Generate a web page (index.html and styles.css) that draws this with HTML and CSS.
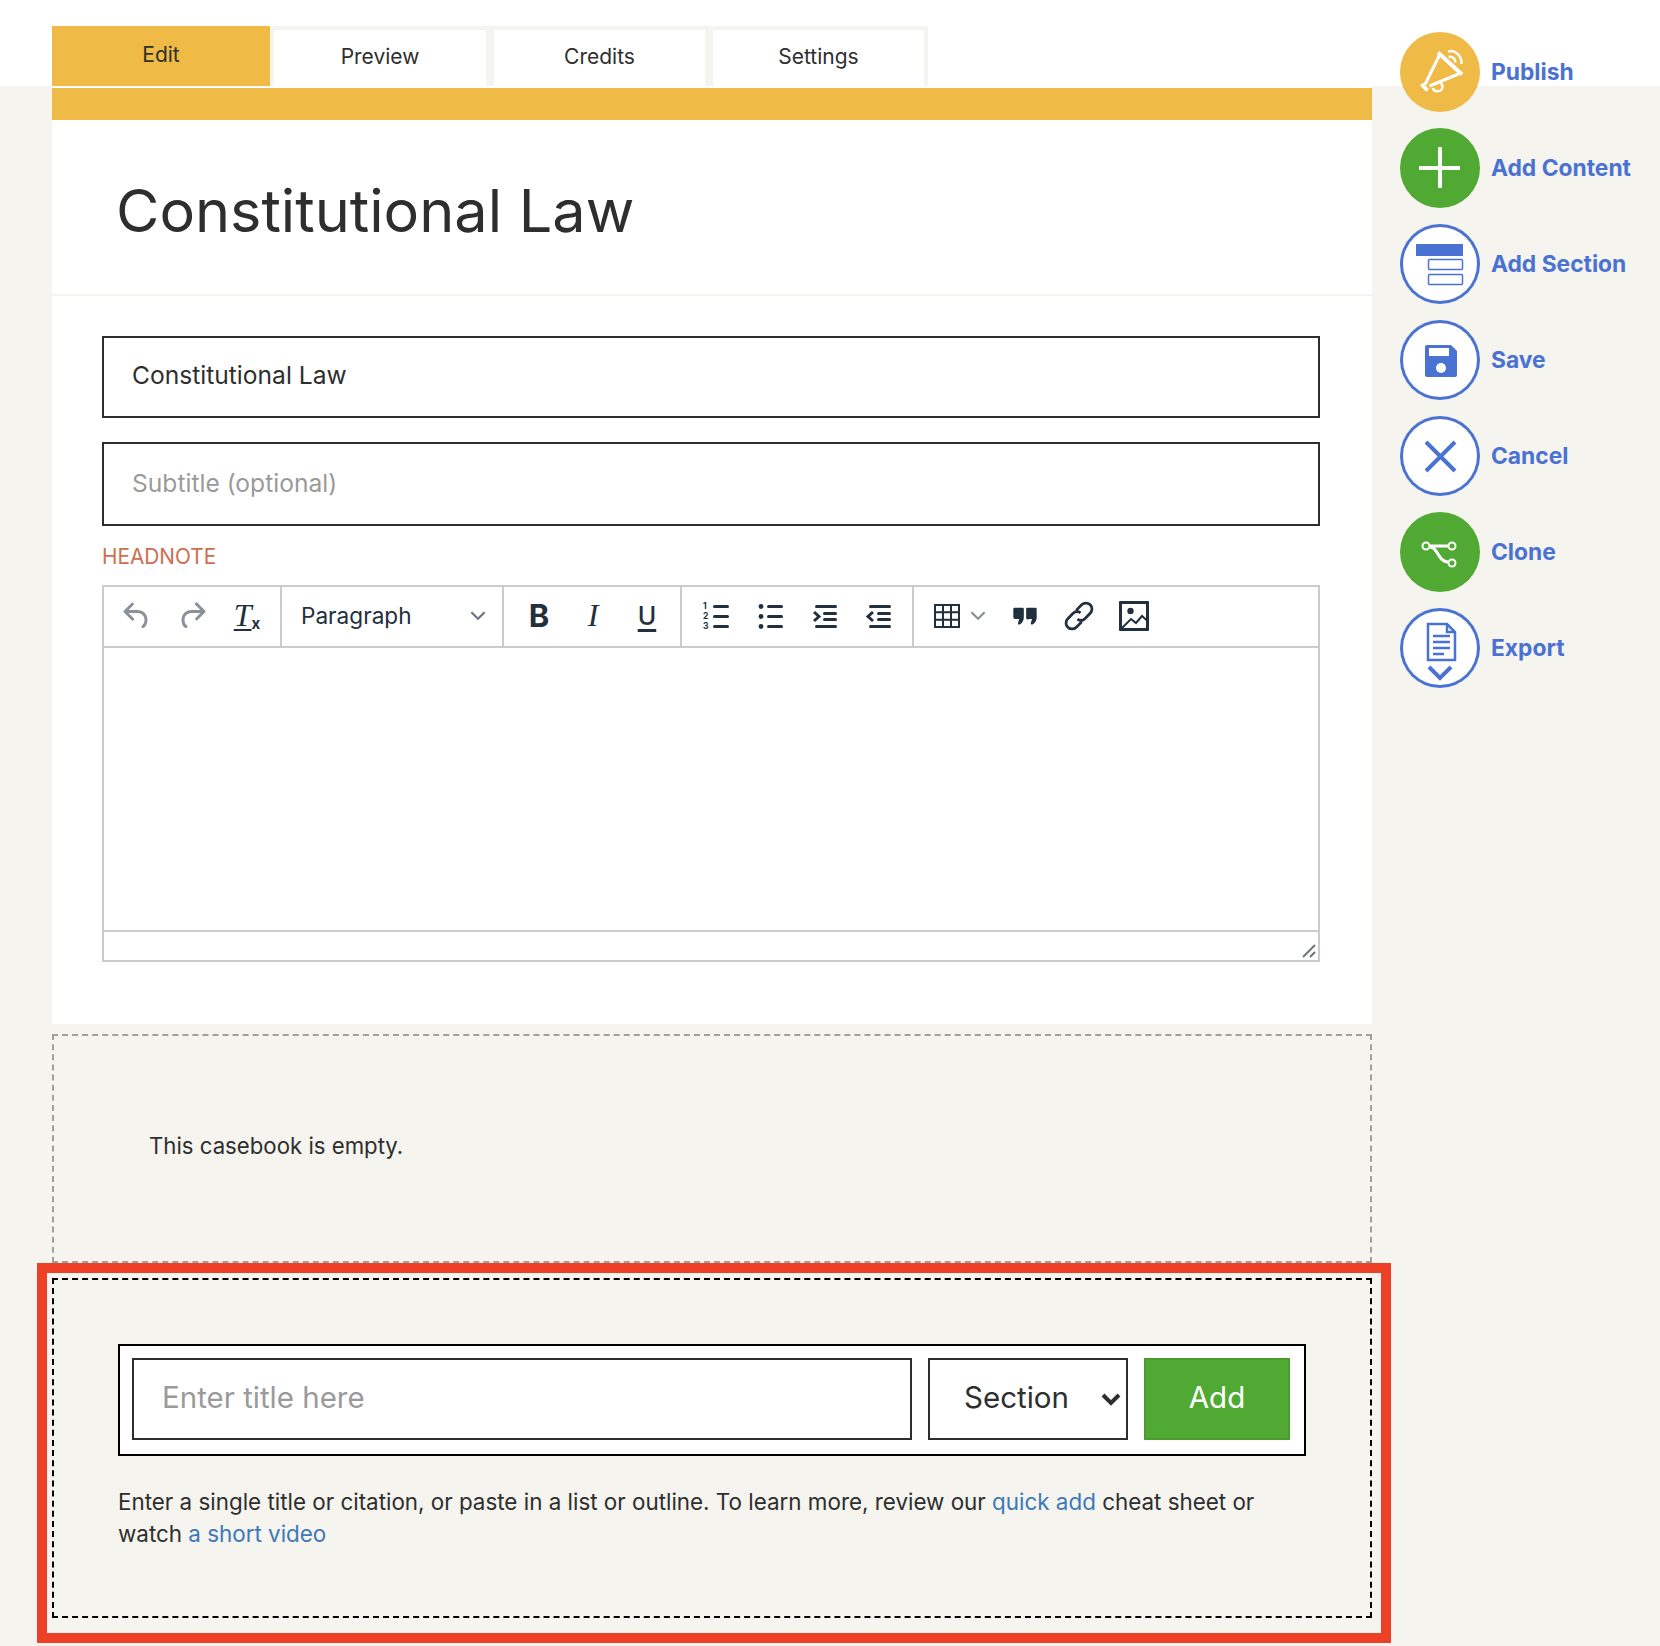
FILE: index.html

```html
<!DOCTYPE html>
<html lang="en">
<head>
  <meta charset="UTF-8" />
  <meta name="viewport" content="width=device-width, initial-scale=1.0"/>
  <title>Constitutional Law</title>
  <link rel="stylesheet" href="styles.css">
</head>
<body>
  <div class="page">
    <main class="content">
      <nav class="tabs">
        <a class="tab tab-active">Edit</a>
        <div class="tab-group">
          <a class="tab">Preview</a>
          <a class="tab">Credits</a>
          <a class="tab">Settings</a>
        </div>
      </nav>

      <section class="panel">
        <div class="panel-bar"></div>
        <header class="panel-head">
          <h1>Constitutional Law</h1>
        </header>
        <form class="details">
          <input class="field" type="text" value="Constitutional Law" />
          <input class="field field-sub" type="text" placeholder="Subtitle (optional)" />
          <label class="field-label">HEADNOTE</label>

          <div class="editor">
            <div class="toolbar">
              <div class="tool-group tool-history">
                <button type="button" class="tool tool-muted">
                  <svg viewBox="0 0 24 24"><path d="M6.4 8H12c3.7 0 6.2 2 6.8 5.1.6 2.7-.4 5.6-2.3 6.8a1 1 0 0 1-1-1.8c1.1-.6 1.8-2.7 1.4-4.6-.5-2.1-2.1-3.5-4.9-3.5H6.4l3.3 3.3a1 1 0 1 1-1.4 1.4l-5-5a1 1 0 0 1 0-1.4l5-5a1 1 0 0 1 1.4 1.4L6.4 8z"/></svg>
                </button>
                <button type="button" class="tool tool-muted">
                  <svg viewBox="0 0 24 24"><path d="M17.6 10H12c-2.8 0-4.4 1.4-4.9 3.5-.4 2 .3 4 1.4 4.6a1 1 0 1 1-1 1.8c-2-1.2-2.9-4.1-2.3-6.8.6-3 3-5.1 6.8-5.1h5.6l-3.3-3.3a1 1 0 1 1 1.4-1.4l5 5a1 1 0 0 1 0 1.4l-5 5a1 1 0 0 1-1.4-1.4l3.3-3.3z"/></svg>
                </button>
                <button type="button" class="tool tool-clear"><span class="clear-t">T</span><span class="clear-x">x</span></button>
              </div>
              <div class="tool-group tool-format">
                <span>Paragraph</span>
                <svg class="chevron" viewBox="0 0 16 10"><path d="M2 2l6 6 6-6"/></svg>
              </div>
              <div class="tool-group tool-text">
                <button type="button" class="tool tool-bold">B</button>
                <button type="button" class="tool tool-italic">I</button>
                <button type="button" class="tool tool-under">U</button>
              </div>
              <div class="tool-group tool-lists">
                <button type="button" class="tool">
                  <svg viewBox="0 0 30 30">
                    <text class="list-num" x="1" y="8">1</text>
                    <text class="list-num" x="1" y="17.500">2</text>
                    <text class="list-num" x="1" y="27.500">3</text>
                    <rect x="11" y="4" width="16" height="3" rx="1.5"/>
                    <rect x="11" y="14" width="16" height="3" rx="1.5"/>
                    <rect x="11" y="24" width="16" height="3" rx="1.5"/>
                  </svg>
                </button>
                <button type="button" class="tool">
                  <svg viewBox="0 0 30 30">
                    <circle cx="5" cy="5.500" r="2.400"/><circle cx="5" cy="15.500" r="2.400"/><circle cx="5" cy="25.500" r="2.400"/>
                    <rect x="11" y="4" width="16" height="3" rx="1.5"/>
                    <rect x="11" y="14" width="16" height="3" rx="1.5"/>
                    <rect x="11" y="24" width="16" height="3" rx="1.5"/>
                  </svg>
                </button>
                <button type="button" class="tool">
                  <svg viewBox="0 0 30 30">
                    <rect x="5" y="4" width="22" height="3" rx="1.5"/>
                    <rect x="13" y="11" width="14" height="3" rx="1.5"/>
                    <rect x="13" y="17" width="14" height="3" rx="1.5"/>
                    <rect x="5" y="24" width="22" height="3" rx="1.5"/>
                    <path class="line" d="M4 11l5 4.500-5 4.500"/>
                  </svg>
                </button>
                <button type="button" class="tool">
                  <svg viewBox="0 0 30 30">
                    <rect x="5" y="4" width="22" height="3" rx="1.5"/>
                    <rect x="13" y="11" width="14" height="3" rx="1.500"/>
                    <rect x="13" y="17" width="14" height="3" rx="1.500"/>
                    <rect x="5" y="24" width="22" height="3" rx="1.5"/>
                    <path class="line" d="M9 11l-5 4.500 5 4.500"/>
                  </svg>
                </button>
              </div>
              <div class="tool-group tool-insert">
                <button type="button" class="tool tool-table">
                  <svg viewBox="0 0 26 24">
                    <path class="line thin" d="M1 1h24v22H1zM1 8.300h24M1 15.700h24M9 1v22M17 1v22"/>
                  </svg>
                </button>
                <svg class="chevron" viewBox="0 0 16 10"><path d="M2 2l6 6 6-6"/></svg>
                <button type="button" class="tool tool-quote">
                  <svg viewBox="0 0 24 24">
                    <path d="M3 5h7a1 1 0 0 1 1 1v7c0 2.500-1.300 5-3.500 6.200-1 .5-1.800-.2-1.500-1.200l1-3.500H3.500A1.500 1.500 0 0 1 2 13V6a1 1 0 0 1 1-1zM14 5h7a1 1 0 0 1 1 1v7c0 2.500-1.300 5-3.500 6.200-1 .5-1.800-.2-1.500-1.200l1-3.500h-2.500A1.500 1.500 0 0 1 13 13V6a1 1 0 0 1 1-1z"/>
                  </svg>
                </button>
                <button type="button" class="tool tool-link">
                  <svg viewBox="0 0 30 30">
                    <path class="line thick" d="M12.500 9.500l5-5a5.500 5.500 0 0 1 8 8l-5 5a5.500 5.500 0 0 1-7 .5M17.500 20.500l-5 5a5.500 5.500 0 0 1-8-8l5-5a5.500 5.500 0 0 1 7-.5"/>
                  </svg>
                </button>
                <button type="button" class="tool">
                  <svg viewBox="0 0 30 30">
                    <rect x="0" y="0" width="30" height="30" rx="1"/>
                    <rect class="hole" x="3" y="3" width="24" height="24"/>
                    <circle cx="11.500" cy="10" r="3.200"/>
                    <path class="line thin" d="M3 27l9-9 5 4 6-7 5 4.500"/>
                  </svg>
                </button>
              </div>
            </div>
            <div class="editor-body"></div>
            <div class="editor-status">
              <svg class="grip" viewBox="0 0 14 14"><path d="M1 13L13 1M8 13l5-5"/></svg>
            </div>
          </div>
        </form>
      </section>

      <section class="empty-note">
        <p>This casebook is empty.</p>
      </section>

      <div class="callout">
        <section class="quick-add">
          <form class="quick-form">
            <input class="quick-title" type="text" placeholder="Enter title here" />
            <div class="quick-select">
              <select class="quick-type">
                <option>Section</option>
                <option>Resource</option>
              </select>
              <svg class="quick-arrow" viewBox="0 0 20 14"><path d="M2 2l8 8 8-8"/></svg>
            </div>
            <button type="button" class="quick-btn">Add</button>
          </form>
          <p class="quick-help">Enter a single title or citation, or paste in a list or outline. To learn more, review our <a href="#">quick add</a> cheat sheet or watch <a href="#">a short video</a></p>
        </section>
      </div>
    </main>

    <aside class="actions">
      <a class="action">
        <span class="action-icon icon-gold">
          <svg viewBox="0 0 80 80">
            <path class="stroke-white wide" d="M38 20.500l24 22M21.500 52l6 6.500"/>
            <path class="stroke-white" d="M39.500 23L25 52.500M58.500 42L29.500 54"/>
            <path class="stroke-white thin" d="M33 56c1 4.500 8 4.500 9.500-.5.500-2-.5-3.500-2-4.500"/>
            <path class="stroke-white thin" d="M48 19.500c7-2 14 4 13.500 12.500M48.500 25c4-1 7 2 7 5.500"/>
          </svg>
        </span>
        <span class="action-label">Publish</span>
      </a>
      <a class="action">
        <span class="action-icon icon-green">
          <svg viewBox="0 0 80 80"><path class="stroke-white wide" d="M40 19v41M19 40h41"/></svg>
        </span>
        <span class="action-label">Add Content</span>
      </a>
      <a class="action">
        <span class="action-icon icon-outline">
          <svg viewBox="0 0 80 80">
            <rect class="fill-blue" x="16" y="20" width="47" height="12"/>
            <rect class="stroke-blue" x="28.500" y="35.500" width="34" height="10" rx="1"/>
            <rect class="stroke-blue" x="28.500" y="50.500" width="34" height="10" rx="1"/>
          </svg>
        </span>
        <span class="action-label">Add Section</span>
      </a>
      <a class="action">
        <span class="action-icon icon-outline">
          <svg viewBox="0 0 80 80">
            <path class="fill-blue" d="M27 25h24l6 6v24a2 2 0 0 1-2 2H27a2 2 0 0 1-2-2V27a2 2 0 0 1 2-2z"/>
            <rect class="fill-white" x="29" y="28" width="20" height="8"/>
            <circle class="fill-white" cx="41" cy="48" r="5"/>
          </svg>
        </span>
        <span class="action-label">Save</span>
      </a>
      <a class="action">
        <span class="action-icon icon-outline">
          <svg viewBox="0 0 80 80"><path class="stroke-blue wide" d="M26 26l29 29M55 26L26 55"/></svg>
        </span>
        <span class="action-label">Cancel</span>
      </a>
      <a class="action">
        <span class="action-icon icon-green">
          <svg viewBox="0 0 80 80">
            <path class="stroke-white" d="M30 34h18M30 35c8 0 8 15 18 15"/>
            <circle class="ring-white" cx="26" cy="34" r="3.500"/>
            <circle class="ring-white" cx="52" cy="34" r="3.500"/>
            <circle class="ring-white" cx="52" cy="51" r="3.500"/>
          </svg>
        </span>
        <span class="action-label">Clone</span>
      </a>
      <a class="action">
        <span class="action-icon icon-outline">
          <svg viewBox="0 0 80 80">
            <path class="stroke-blue medium" d="M28 16h19l8 8v28H28zM47 16v8h8"/>
            <path class="stroke-blue medium" d="M33 28h17M33 34h17M33 40h17M33 46h11"/>
            <path class="stroke-blue wide" d="M29 59l11 11 11-11"/>
          </svg>
        </span>
        <span class="action-label">Export</span>
      </a>
    </aside>
  </div>
</body>
</html>
```

FILE: styles.css

```css
* {
  box-sizing: border-box;
}
body {
  margin: 0;
  font-family: Inter, "Liberation Sans", sans-serif;
  color: #2e2e2e;
  background: linear-gradient(#fff 86px, #f5f4ee 86px);
}
.page {
  display: flex;
  padding-left: 52px;
  height: 1646px;
  overflow: hidden;
}
.content {
  width: 1320px;
  padding-top: 26px;
}

/* tabs */
.tabs {
  display: flex;
  height: 60px;
}
.tab {
  display: flex;
  align-items: center;
  justify-content: center;
  font-size: 21px;
  color: #2e2e2e;
}
.tab-active {
  width: 218px;
  background: #efba45;
  padding-bottom: 4px;
}
.tab-group {
  display: flex;
  gap: 8px;
  padding: 4px 4px 0 4px;
  background: #f5f4ee;
}
.tab-group .tab {
  width: 211px;
  padding-bottom: 4px;
  background: #fff;
}
.tab-group .tab:first-child {
  width: 212px;
}

/* main panel */
.panel {
  background: #fff;
  padding-top: 2px;
}
.panel-bar {
  height: 32px;
  background: #efba45;
}
.panel-head {
  display: flex;
  align-items: center;
  height: 176px;
  padding: 6px 64px 0;
  border-bottom: 2px solid #f5f4ee;
}
.panel-head h1 {
  margin: 0;
  font-size: 59.4px;
  font-weight: 400;
}
.details {
  padding: 40px 52px 62px 50px;
}
.field {
  display: block;
  width: 100%;
  height: 82px;
  margin-bottom: 24px;
  padding: 0 28px 4px;
  border: 2px solid #2e2e2e;
  border-radius: 0;
  outline: none;
  background: #fff;
  font: inherit;
  font-size: 24.6px;
  color: #2e2e2e;
}
.field-sub {
  height: 84px;
  margin-bottom: 17px;
  padding-bottom: 2px;
}
.field::placeholder,
.quick-title::placeholder {
  color: #9a9a9a;
  opacity: 1;
}
.field-label {
  display: block;
  height: 28px;
  margin-bottom: 14px;
  line-height: 28px;
  font-size: 20.8px;
  color: #cf6e4e;
}

/* editor */
.editor {
  height: 377px;
  display: flex;
  flex-direction: column;
  border: 2px solid #ccc;
}
.toolbar {
  display: flex;
  height: 61px;
  border-bottom: 2px solid #ccc;
}
.tool-group {
  display: flex;
  align-items: center;
  height: 100%;
  padding-bottom: 2px;
  border-right: 2px solid #ccc;
}
.tool-history { width: 178px; padding-left: 15px; gap: 19px; }
.tool-format { width: 222px; padding: 0 15px 2px 19px; justify-content: space-between; font-size: 22.6px; color: #222f3e; }
.tool-text { width: 178px; padding-left: 17px; gap: 18px; }
.tool-lists { width: 232px; padding-left: 17px; gap: 18px; }
.tool-insert { flex: 1; border-right: 0; padding-left: 19px; gap: 20px; }
.tool {
  display: flex;
  align-items: center;
  justify-content: center;
  width: 36px;
  height: 36px;
  padding: 0;
  border: 0;
  background: none;
  color: #222f3e;
  font-family: inherit;
}
.tool svg {
  width: 30px;
  height: 30px;
  fill: #222f3e;
}
.tool-muted svg {
  width: 36px;
  height: 36px;
  fill: #8a9199;
}
.tool-clear {
  font-family: "Liberation Serif", serif;
  font-style: italic;
}
.clear-t {
  font-size: 32px;
  font-weight: 400;
  text-decoration: underline;
  text-decoration-thickness: 2px;
  text-underline-offset: 3px;
}
.clear-x {
  font-family: Inter, sans-serif;
  font-style: normal;
  font-weight: 700;
  font-size: 15px;
  margin-top: 16px;
}
.tool-bold { font-size: 31px; font-weight: 700; }
.tool-italic { font-family: "Liberation Serif", serif; font-style: italic; font-size: 32px; }
.tool-under { font-size: 25px; font-weight: 500; text-decoration: underline; text-underline-offset: 4px; text-decoration-thickness: 3px; }
.list-num {
  font-family: Inter, sans-serif;
  font-size: 8.5px;
  font-weight: 700;
}
.tool .line {
  fill: none;
  stroke: #222f3e;
  stroke-width: 3;
}
.tool .thin {
  stroke-width: 2;
}
.tool .thick {
  stroke-width: 2.6;
}
.tool .hole {
  fill: #fff;
}
.chevron {
  width: 18px;
  height: 11px;
  fill: none;
  stroke: #8a9199;
  stroke-width: 2;
}
.tool-format .chevron {
  stroke: #6b7480;
}
.tool-table { width: 28px; margin-right: -12px; }
.tool-table svg { width: 26px; height: 24px; }
.tool-quote svg { width: 28px; height: 28px; }
.tool-link { margin: 0 -1px 0 -2px; }
.tool-link svg { width: 32px; height: 32px; }
.editor-body {
  flex: 1;
  border-bottom: 2px solid #ccc;
}
.editor-status {
  display: flex;
  justify-content: flex-end;
  align-items: flex-end;
  height: 28px;
  padding: 0 2px 2px 0;
}
.grip {
  width: 14px;
  height: 14px;
  fill: none;
  stroke: #6d7580;
  stroke-width: 2;
}

/* empty note */
.empty-note {
  display: flex;
  align-items: center;
  height: 229px;
  margin-top: 10px;
  padding: 0 0 6px 95px;
  border: 2px dashed #a0a0a0;
}
.empty-note p {
  margin: 0;
  font-size: 22.2px;
}

/* highlighted quick add */
.callout {
  width: 1354px;
  height: 380px;
  margin-left: -15px;
  padding: 5px 9px 0 5px;
  border: 10px solid #ee4027;
}
.quick-add {
  height: 340px;
  padding: 64px 64px 0;
  border: 2px dashed #000;
}
.quick-form {
  display: flex;
  gap: 16px;
  height: 112px;
  padding: 12px 14px 14px 12px;
  border: 2px solid #000;
  background: #fff;
}
.quick-title {
  flex: 1;
  min-width: 0;
  padding: 0 28px 4px;
  border: 2px solid #2e2e2e;
  border-radius: 0;
  outline: none;
  font: inherit;
  font-size: 29.5px;
}
.quick-select {
  position: relative;
  width: 200px;
}
.quick-type {
  width: 100%;
  height: 100%;
  padding: 0 0 4px 34px;
  border: 2px solid #2e2e2e;
  border-radius: 0;
  outline: none;
  appearance: none;
  background: #fff;
  font: inherit;
  font-size: 29.5px;
  color: #2e2e2e;
}
.quick-arrow {
  position: absolute;
  top: 35px;
  right: 7px;
  width: 20px;
  height: 14px;
  fill: none;
  stroke: #2e2e2e;
  stroke-width: 4;
  pointer-events: none;
}
.quick-btn {
  width: 146px;
  padding: 0 0 4px;
  border: 2px solid #4b9b30;
  background: #50a932;
  color: #fff;
  font: inherit;
  font-size: 29.5px;
}
.quick-help {
  margin: 30px 0 0;
  font-size: 22.4px;
  line-height: 32px;
}
.quick-help a {
  color: #3d78b8;
  text-decoration: none;
}

/* side actions */
.actions {
  display: flex;
  flex-direction: column;
  gap: 16px;
  margin-left: 28px;
  padding-top: 32px;
}
.action {
  display: flex;
  align-items: center;
  gap: 11px;
  height: 80px;
}
.action-icon {
  width: 80px;
  height: 80px;
  border-radius: 50%;
  overflow: hidden;
}
.action-icon svg {
  display: block;
  width: 80px;
  height: 80px;
}
.icon-gold { background: #efba45; }
.icon-green { background: #50a932; }
.icon-outline { background: #fff; box-shadow: inset 0 0 0 3px #4a72d3; }
.action-label {
  padding-bottom: 2px;
  font-size: 22.8px;
  font-weight: 700;
  color: #4a72d3;
}
.stroke-white, .stroke-blue, .ring-white {
  fill: none;
  stroke-width: 3;
}
.stroke-white { stroke: #fff; }
.stroke-blue { stroke: #4a72d3; stroke-width: 1.5; }
.ring-white { stroke: #fff; stroke-width: 2; }
.medium { stroke-width: 2.5; }
.wide { stroke-width: 4; }
.thin { stroke-width: 2.5; }
.fill-blue { fill: #4a72d3; }
.fill-white { fill: #fff; }
```
